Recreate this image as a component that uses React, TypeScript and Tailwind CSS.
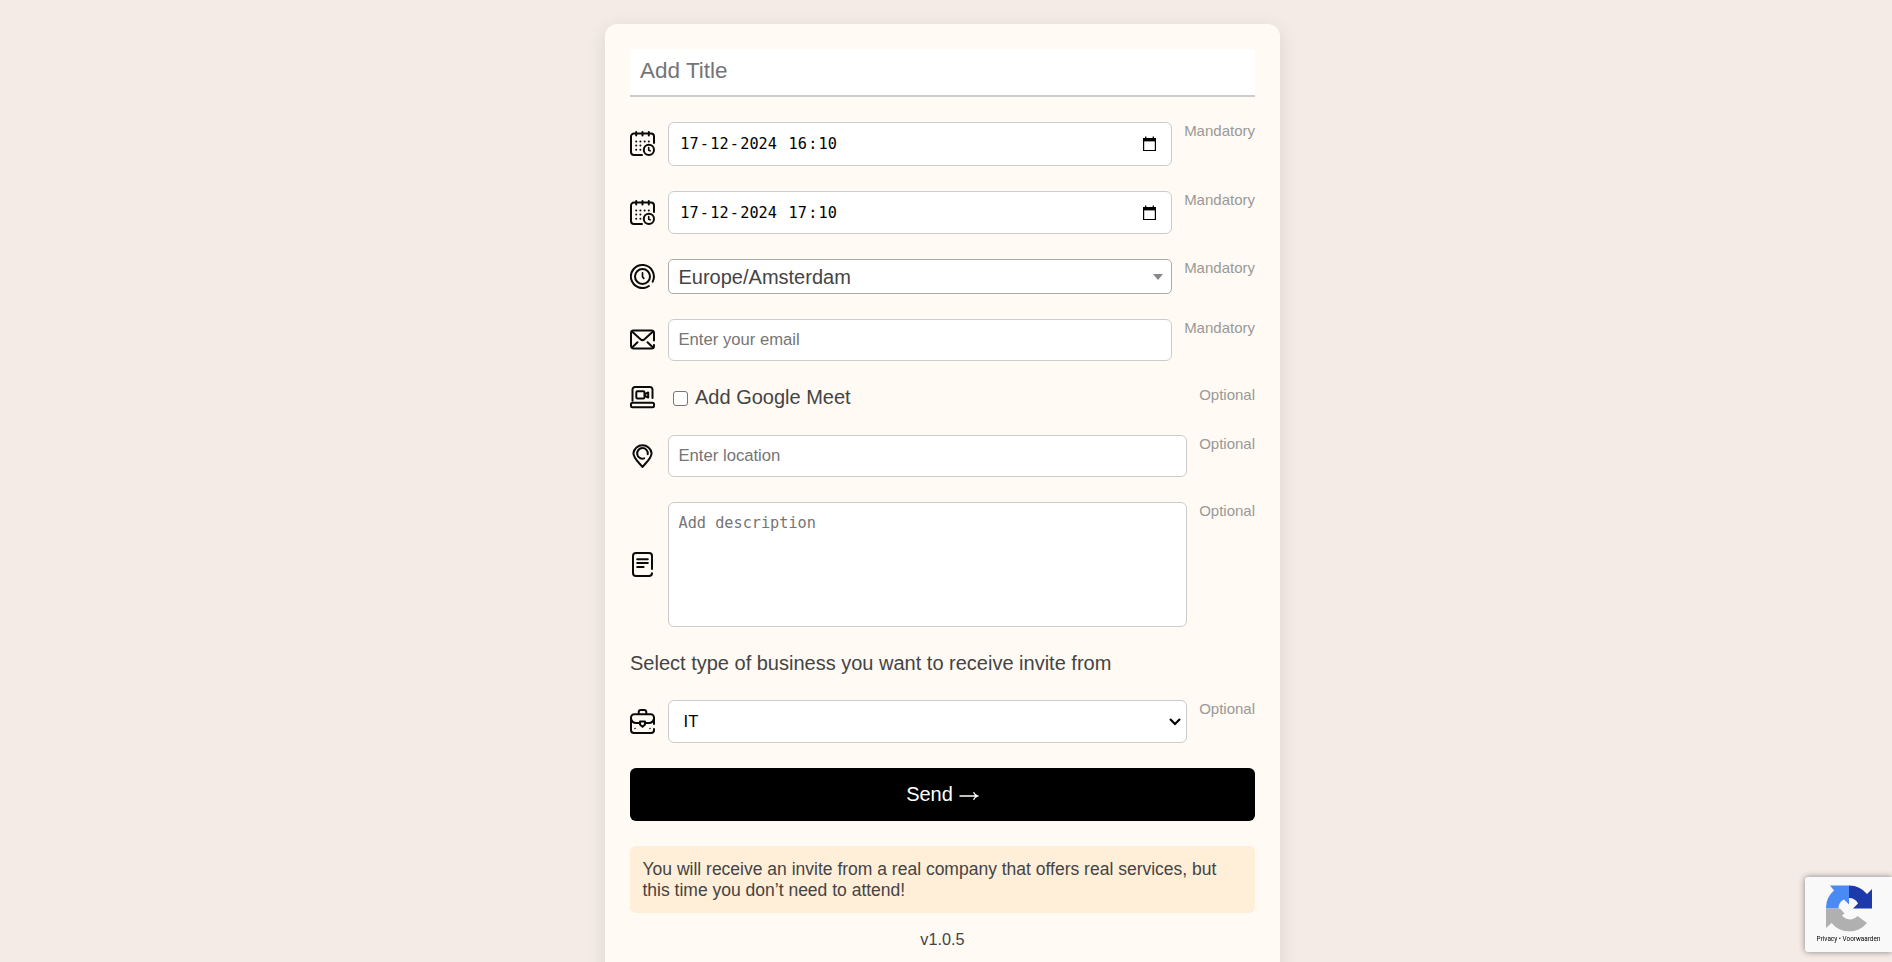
import type { ReactNode } from "react";

const ICON = "block h-[25px] w-[25px] shrink-0";

function Icon({ children }: { children: ReactNode }) {
  return (
    <svg
      viewBox="0 0 25 25"
      className={ICON}
      fill="none"
      stroke="#0a0a0a"
      strokeWidth="2"
      strokeLinecap="round"
      strokeLinejoin="round"
    >
      {children}
    </svg>
  );
}

const DOTS = [
  [6.2, 10.4], [10.4, 10.4], [14.6, 10.4], [18.8, 10.4],
  [6.2, 14.6], [10.4, 14.6],
  [6.2, 18.8], [10.4, 18.8],
];

function CalendarIcon() {
  return (
    <Icon>
      <path d="M12 24H4a3 3 0 0 1-3-3V5.500a3 3 0 0 1 3-3h17a3 3 0 0 1 3 3V12" />
      <path d="M6.200 1v3.400M12.500 1v3.400M18.800 1v3.400" />
      {DOTS.map(([x, y], i) => (
        <circle key={i} cx={x} cy={y} r="1" fill="#0a0a0a" stroke="none" />
      ))}
      <circle cx="18.900" cy="18.900" r="5.100" />
      <path d="M18.700 16.600v2.600l1.500.6" strokeWidth="1.600" />
    </Icon>
  );
}

function ClockIcon() {
  return (
    <Icon>
      <path d="M22.700 17.600a11.500 11.500 0 1 0-3.800 4.400" />
      <circle cx="12.500" cy="12.500" r="7.500" />
      <path d="M12.500 8.800v4l1.300 1.600" strokeWidth="1.700" />
    </Icon>
  );
}

function MailIcon() {
  return (
    <Icon>
      <path d="M24 13.500V6a2.500 2.500 0 0 0-2.500-2.500h-18A2.500 2.500 0 0 0 1 6v13a2.500 2.500 0 0 0 2.500 2.500h18A2.500 2.500 0 0 0 24 19v-1" />
      <path d="m2 4.500 8.500 7.700a3 3 0 0 0 4 0L23 4.500M2 20.500l5.500-5.200M23 20.500l-5.500-5.200" />
    </Icon>
  );
}

function MeetIcon() {
  return (
    <Icon>
      <path d="M2.500 14.800V3.500a2.500 2.500 0 0 1 2.500-2.500h15a2.500 2.500 0 0 1 2.500 2.500V12" />
      <rect x="1" y="16.800" width="23" height="4.400" rx="1.500" />
      <rect x="6.300" y="5.300" width="8.200" height="7.200" rx="1.200" />
      <path d="m14.800 8.200 3.400-1.700v5l-3.400-1.700" />
    </Icon>
  );
}

function PinIcon() {
  return (
    <Icon>
      <path d="M12.500 24C9.800 20.200 3.400 15.500 3.400 10.200a9.200 9.200 0 0 1 18.200 0c0 5.300-6.400 10-9.100 13.800Z" />
      <path d="M14.200 15.400A5.300 5.300 0 1 1 17.700 11.200" />
    </Icon>
  );
}

function NoteIcon() {
  return (
    <Icon>
      <path d="M22 17V4a3 3 0 0 0-3-3H6a3 3 0 0 0-3 3v17a3 3 0 0 0 3 3h13c1.700 0 3-1.200 3-2.800" />
      <path d="M7.200 7.200h10.600M7.200 11.100h10.600M7.200 15h6.400" />
    </Icon>
  );
}

function BriefcaseIcon() {
  return (
    <Icon>
      <path d="M8.700 5V3.200A2.200 2.200 0 0 1 10.900 1h3.200a2.200 2.200 0 0 1 2.200 2.200V5" />
      <path d="M24 15V8.500A3.300 3.300 0 0 0 20.700 5.200H4.300A3.300 3.300 0 0 0 1 8.500V21a3 3 0 0 0 3 3h17a3 3 0 0 0 3-3v-1" />
      <path d="M1 9.500c.5 2.900 2.300 4.500 5.300 4.500h3.500M24 9.500c-.5 2.900-2.300 4.500-5.300 4.500h-3.500" />
      <path d="M10 12.500h5v2.900l-2.500 2.300-2.500-2.300Z" />
      <path d="M5 19.500h.01M20 19.500h.01" strokeWidth="1.600" />
    </Icon>
  );
}

const HINT = "shrink-0 text-[15px] leading-[17px] text-[#999]";
const FIELD = "min-w-0 flex-1 rounded-[6px] border border-[#ccc] bg-white";

function Row({ icon, hint, children }: { icon: ReactNode; hint: string; children: ReactNode }) {
  return (
    <div className="flex items-center">
      <div className="pb-[1px]">{icon}</div>
      <div className="ml-[13px] flex min-w-0 flex-1 items-start gap-[12px]">
        {children}
        <span className={HINT}>{hint}</span>
      </div>
    </div>
  );
}

function DateField({ parts, time, className }: { parts: string[]; time: string[]; className: string }) {
  const seg = "px-[1.250px]";
  return (
    <div className={`${FIELD} ${className} flex items-center justify-between pl-[10px] pr-[12px]`}>
      <div className="whitespace-pre font-['DejaVu_Sans_Mono',monospace] text-[15.220px] leading-[20px] text-black">
        <span className={seg}>{parts[0]}</span>-<span className={seg}>{parts[1]}</span>-
        <span className={seg}>{parts[2]}</span>{" "}
        <span className={seg}>{time[0]}</span>:<span className={seg}>{time[1]}</span>
      </div>
      <svg viewBox="0 0 18 18" className="h-[18px] w-[18px]">
        <path d="M4.700 1.500v2M12.300 1.500v2" stroke="#000" strokeWidth="1.300" />
        <path d="M2.600 3.500h11.800v12h-11.800z" fill="none" stroke="#000" strokeWidth="1.200" />
        <path d="M2 3h13v3.400H2z" fill="#000" />
      </svg>
    </div>
  );
}

function RecaptchaBadge() {
  return (
    <div className="fixed bottom-[10px] right-0 flex h-[75px] w-[87px] flex-col items-center rounded-l-[3px] bg-[#f9f9f9] pt-[8px] shadow-[0_0_6px_gray]">
      <svg viewBox="0 0 46 47" className="h-[47px] w-[46px]">
        <path d="M0 23.500A23 23 0 0 1 8 5.500L4 0.500h19v19l-5-5a10 10 0 0 0-5.500 9z" fill="#4a8af4" />
        <path d="M23 .5a23 23 0 0 1 18 8.500l5-5v19.500H27l5-5a10 10 0 0 0-9-5.500z" fill="#1c3aa9" />
        <path d="M0 23.500h14l4.500 5-2.500 2a10 10 0 0 0 15.500.5l9.500 7A23 23 0 0 1 5.500 38L0 43z" fill="#b0b0b0" />
      </svg>
      <div className="mt-[2px] whitespace-nowrap font-['Roboto',sans-serif] text-[6.400px] leading-[10px] text-black">
        Privacy • Voorwaarden
      </div>
    </div>
  );
}

export default function App() {
  return (
    <div className="flex h-[962px] justify-center overflow-hidden bg-[#f5ebe6] pl-[1px] pr-[8px] pt-[24px] font-['Liberation_Sans',Arial,sans-serif] text-[#444]">
      <div className="flex h-[980px] w-[675px] shrink-0 flex-col gap-[25px] rounded-[12px] bg-[#fffaf3] p-[25px] shadow-[0_5px_19px_rgba(0,0,0,0.1)]">
        <input
          placeholder="Add Title"
          className="h-[48px] w-full shrink-0 border-b-2 border-[#ccc] bg-white px-[10px] pb-[3px] text-[22.500px] placeholder:text-[#757575]"
        />

        <Row icon={<CalendarIcon />} hint="Mandatory">
          <DateField parts={["17", "12", "2024"]} time={["16", "10"]} className="h-[44px]" />
        </Row>
        <Row icon={<CalendarIcon />} hint="Mandatory">
          <DateField parts={["17", "12", "2024"]} time={["17", "10"]} className="h-[43px]" />
        </Row>

        <Row icon={<ClockIcon />} hint="Mandatory">
          <div className="flex h-[35px] min-w-0 flex-1 items-center justify-between rounded-[5px] border border-[#aaa] bg-white pl-[9.500px] pr-[8px] text-[20px]">
            <span>Europe/Amsterdam</span>
            <svg viewBox="0 0 10 6" className="h-[6px] w-[10px]">
              <path d="M0 0h10L5 6z" fill="#888" />
            </svg>
          </div>
        </Row>

        <Row icon={<MailIcon />} hint="Mandatory">
          <input
            placeholder="Enter your email"
            className={`${FIELD} h-[42px] px-[9.500px] pb-[1px] text-[16.670px] placeholder:text-[#757575]`}
          />
        </Row>

        <div className="flex h-[24px] items-start">
          <MeetIcon />
          <label className="ml-[18px] flex flex-1 items-center gap-[7px] text-[20px] leading-[23px]">
            <span className="mt-[2px] h-[15px] w-[15px] rounded-[3px] border border-[#767676] bg-white" />
            Add Google Meet
          </label>
          <span className={HINT}>Optional</span>
        </div>

        <Row icon={<PinIcon />} hint="Optional">
          <input
            placeholder="Enter location"
            className={`${FIELD} h-[42px] px-[9.500px] pb-[1px] text-[16.670px] placeholder:text-[#757575]`}
          />
        </Row>

        <Row icon={<NoteIcon />} hint="Optional">
          <textarea
            placeholder="Add description"
            className={`${FIELD} h-[125px] resize-none px-[9.500px] py-[10px] font-['DejaVu_Sans_Mono',monospace] text-[15.220px] leading-[20px] placeholder:text-[#757575]`}
          />
        </Row>

        <p className="text-[20px] leading-[23px]">Select type of business you want to receive invite from</p>

        <Row icon={<BriefcaseIcon />} hint="Optional">
          <div className={`${FIELD} flex h-[43px] items-center justify-between pl-[14.500px] pr-[5px] text-[16.670px] text-black`}>
            <span>IT</span>
            <svg viewBox="0 0 12 8" className="h-[8px] w-[12px]" fill="none" stroke="#000" strokeWidth="2.200">
              <path d="m1 1 5 5 5-5" />
            </svg>
          </div>
        </Row>

        <button className="flex h-[53px] shrink-0 items-center justify-center gap-[6px] rounded-[6px] bg-black pb-[2px] text-[20px] text-white">
          Send
          <svg viewBox="0 0 20 10" className="mt-[4px] h-[10px] w-[20px]" fill="none" stroke="#fff" strokeWidth="1.300">
            <path d="M.5 5h18M14.500 1.200c.8 1.800 2 3 4.300 3.800-2.300.8-3.500 2-4.300 3.800" />
          </svg>
        </button>

        <div className="rounded-[6px] bg-[#ffeed8] p-[12.500px] text-[17.500px] leading-[21px]">
          You will receive an invite from a real company that offers real services, but this time you don’t need to
          attend!
        </div>

        <div className="-mt-[8px] text-center text-[16.250px] leading-[19px]">v1.0.5</div>
      </div>
      <RecaptchaBadge />
    </div>
  );
}
